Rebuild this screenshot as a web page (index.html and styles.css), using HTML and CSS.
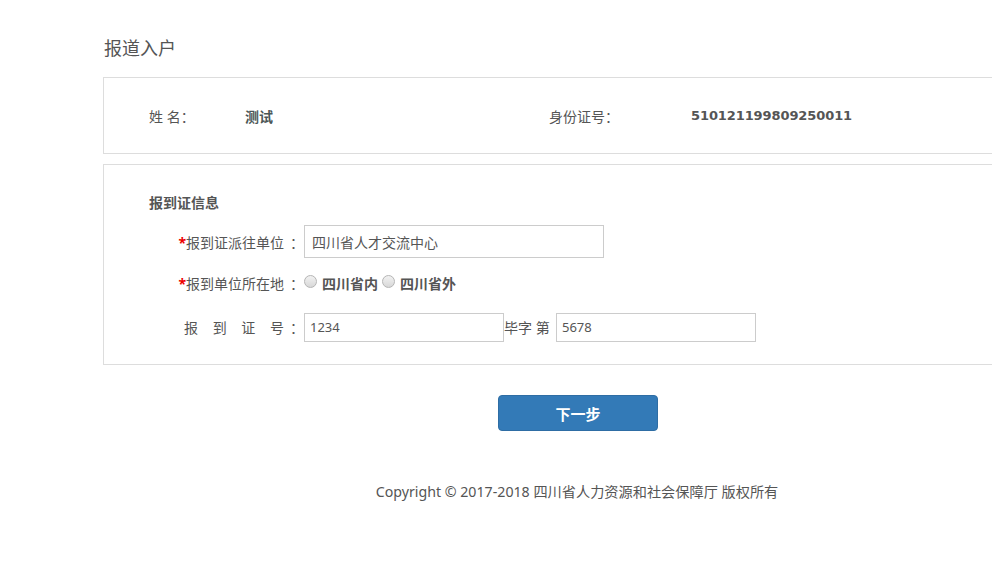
FILE: index.html
```html
<!DOCTYPE html>
<html lang="zh-CN">
<head>
<meta charset="utf-8">
<title>报道入户</title>
<link rel="stylesheet" href="styles.css">
</head>
<body>
<div class="page">
  <h1 class="title">报道入户</h1>
  <div class="box info">
    <div class="pair pair-name">
      <span class="lbl lbl-name">姓 名：</span>
      <span class="val">测试</span>
    </div>
    <div class="pair">
      <span class="lbl lbl-id">身份证号：</span>
      <span class="val num">510121199809250011</span>
    </div>
  </div>
  <div class="box form">
    <div class="section">报到证信息</div>
    <div class="row row1">
      <label class="flabel"><span class="req">*</span>报到证派往单位<span class="colon">：</span></label>
      <input class="inp inp-wide" type="text" value="四川省人才交流中心">
    </div>
    <div class="row row2">
      <label class="flabel"><span class="req">*</span>报到单位所在地<span class="colon">：</span></label>
      <span class="radio"></span><span class="ropt">四川省内</span>
      <span class="radio"></span><span class="ropt">四川省外</span>
    </div>
    <div class="row row3">
      <label class="flabel spaced">报 到 证 号<span class="colon">：</span></label>
      <input class="inp inp-num" type="text" value="1234">
      <span class="mid">毕字 第</span>
      <input class="inp inp-num" type="text" value="5678">
    </div>
  </div>
  <div class="actions">
    <button class="btn" type="button">下一步</button>
  </div>
  <div class="footer">Copyright © 2017-2018 四川省人力资源和社会保障厅 版权所有</div>
</div>
</body>
</html>
```

FILE: styles.css
```css
html, body {
  margin: 0;
  padding: 0;
  overflow: hidden;
  background: #fff;
}
body {
  font-family: "Noto Sans", "Noto Sans CJK SC", sans-serif;
  font-size: 14px;
  color: #555;
}
.page {
  width: 950px;
  margin-left: 103px;
}
.title {
  margin: 38px 0 19px 1px;
  font-size: 18px;
  line-height: 20px;
  font-weight: normal;
  color: #555;
}
.box {
  border: 1px solid #ddd;
  box-sizing: border-box;
}
.info {
  height: 77px;
  display: flex;
  align-items: center;
  padding-left: 45px;
}
.pair {
  display: flex;
  align-items: center;
}
.pair-name {
  width: 400px;
}
.lbl {
  color: #555;
}
.lbl-name {
  width: 96px;
}
.lbl-id {
  width: 142px;
}
.val {
  font-weight: bold;
  color: #4b5656;
}
.num {
  font-family: "DejaVu Sans", sans-serif;
  font-size: 13px;
  letter-spacing: -0.1px;
  color: #555;
}
.form {
  margin-top: 10px;
  padding: 28px 0 23px 45px;
}
.section {
  font-weight: bold;
  line-height: 20px;
  color: #555;
}
.row {
  display: flex;
  align-items: center;
}
.row1 {
  margin-top: 12px;
  height: 33px;
}
.row2 {
  margin-top: 15px;
  height: 20px;
}
.row3 {
  margin-top: 20px;
  height: 28px;
}
.flabel {
  width: 155px;
  text-align: right;
  color: #555;
  white-space: nowrap;
}
.colon {
  padding-left: 6px;
}
.spaced {
  word-spacing: 11px;
}
.req {
  color: #e00;
  font-weight: bold;
}
.inp {
  box-sizing: border-box;
  border: 1px solid #ccc;
  margin: 0;
  padding: 0 7px;
  font-family: "Noto Sans", "Noto Sans CJK SC", sans-serif;
  color: #555;
  outline: none;
}
.inp-wide {
  width: 300px;
  height: 33px;
  font-size: 14px;
}
.inp-num {
  width: 200px;
  height: 29px;
  font-size: 13px;
  padding-left: 5px;
}
.mid {
  width: 52px;
  color: #555;
}
.radio {
  width: 11px;
  height: 11px;
  border-radius: 50%;
  border: 1px solid #b5b5b5;
  background: linear-gradient(#f2f2f2, #d8d8d8);
  margin-right: 5px;
  margin-top: -4px;
}
.ropt {
  font-weight: bold;
  color: #555;
  margin-right: 4px;
}
.actions {
  margin-top: 30px;
  padding-left: 395px;
}
.btn {
  width: 160px;
  height: 36px;
  background: #337ab7;
  border: 1px solid #2e6da4;
  border-radius: 4px;
  color: #fff;
  font-family: "Noto Sans CJK SC", sans-serif;
  font-size: 15px;
  font-weight: bold;
  padding: 0;
}
.footer {
  margin-top: 51px;
  line-height: 20px;
  text-align: center;
  width: 948px;
  color: #555;
  font-size: 14.2px;
}
```
